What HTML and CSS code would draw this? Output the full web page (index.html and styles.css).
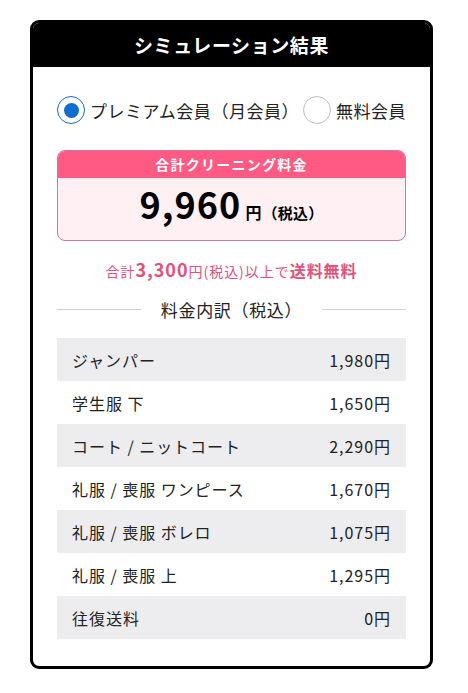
FILE: index.html
```html
<!DOCTYPE html>
<html lang="ja">
<head>
<meta charset="utf-8">
<link rel="stylesheet" href="styles.css">
</head>
<body>
<div class="card">
  <div class="card-head">シミュレーション結果</div>
  <div class="card-body">
    <div class="plans">
      <label class="plan"><span class="radio checked"></span>プレミアム会員（月会員）</label>
      <label class="plan"><span class="radio"></span>無料会員</label>
    </div>
    <div class="total">
      <div class="total-head">合計クリーニング料金</div>
      <div class="total-body"><span class="amount">9,960</span><span class="yen">円</span><span class="tax">（税込）</span></div>
    </div>
    <p class="free">合計<b class="b1">3,300</b>円(税込)以上で<b class="b2">送料無料</b></p>
    <div class="divider"><span>料金内訳（税込）</span></div>
    <div class="list">
      <div class="row"><span>ジャンパー</span><span>1,980円</span></div>
      <div class="row"><span>学生服 下</span><span>1,650円</span></div>
      <div class="row"><span>コート / ニットコート</span><span>2,290円</span></div>
      <div class="row"><span>礼服 / 喪服 ワンピース</span><span>1,670円</span></div>
      <div class="row"><span>礼服 / 喪服 ボレロ</span><span>1,075円</span></div>
      <div class="row"><span>礼服 / 喪服 上</span><span>1,295円</span></div>
      <div class="row"><span>往復送料</span><span>0円</span></div>
    </div>
  </div>
</div>
</body>
</html>
```

FILE: styles.css
```css
* { box-sizing: border-box; }
body {
  margin: 0;
  padding: 20px 35px 0 30px;
  background: #fff;
  font-family: "Noto Sans CJK JP", "Noto Sans", sans-serif;
  color: #222;
  letter-spacing: 0.06em;
}
.card {
  border: 3px solid #000;
  border-radius: 9px;
  overflow: hidden;
  background: #fff;
}
.card-head {
  background: #000;
  color: #fff;
  font-weight: 700;
  font-size: 19px;
  height: 44px;
  line-height: 44px;
  text-align: center;
  letter-spacing: 0.03em;
}
.card-body {
  padding: 29px 24px 27px 24px;
}
.plans {
  display: flex;
  align-items: center;
  gap: 4px;
  height: 28px;
  font-size: 17px;
  letter-spacing: 0.03em;
  white-space: nowrap;
}
.plan {
  display: flex;
  align-items: center;
  gap: 5px;
  color: #222;
  flex-shrink: 0;
}
.radio {
  flex-shrink: 0;
  width: 28px;
  height: 28px;
  border-radius: 50%;
  border: 1px solid #bdbdbd;
  display: inline-flex;
  align-items: center;
  justify-content: center;
  background: #fff;
}
.radio.checked {
  border: 1.5px solid #1a6cc4;
}
.radio.checked::after {
  content: "";
  width: 15px;
  height: 15px;
  border-radius: 50%;
  background: #0f6ccb;
}
.total {
  margin-top: 26px;
  border: 1px solid #d4759a;
  border-radius: 8px;
  overflow: hidden;
  background: #fff0f4;
}
.total-head {
  background: #ff5a83;
  color: #fff;
  font-weight: 700;
  font-size: 14px;
  height: 27px;
  line-height: 27px;
  text-align: center;
  letter-spacing: 0.09em;
}
.total-body {
  height: 62px;
  display: flex;
  align-items: baseline;
  justify-content: center;
  padding-top: 2px;
  color: #000;
  font-weight: 700;
}
.amount {
  font-size: 36px;
  line-height: 46px;
  letter-spacing: 0.03em;
}
.yen {
  font-size: 16px;
  margin-left: 4px;
}
.tax {
  font-size: 15px;
  letter-spacing: 0.02em;
}
.free {
  margin: 16px 0 0;
  text-align: center;
  color: #e4507a;
  font-size: 14px;
  line-height: 24px;
}
.free .b1 { font-size: 18px; }
.free .b2 { font-size: 16px; }
.divider {
  margin-top: 14px;
  display: flex;
  align-items: center;
  gap: 20px;
  font-size: 17px;
  letter-spacing: 0.04em;
  color: #222;
  height: 24px;
}
.divider::before, .divider::after {
  content: "";
  flex: 1;
  height: 1px;
  background: #cfcfcf;
}
.list {
  margin-top: 17px;
}
.row {
  display: flex;
  justify-content: space-between;
  align-items: center;
  height: 43px;
  padding: 0 15px 0 15px;
  font-size: 16px;
  color: #222;
}
.row:nth-child(odd) {
  background: #ededf0;
}
```
